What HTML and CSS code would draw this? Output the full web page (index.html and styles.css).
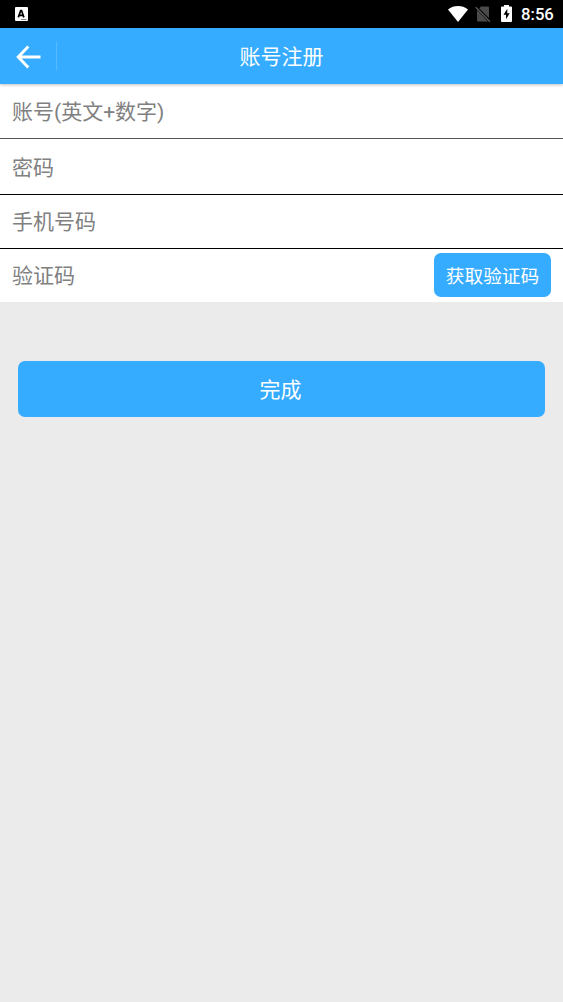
FILE: index.html
```html
<!DOCTYPE html>
<html lang="zh-CN">
<head>
<meta charset="utf-8">
<title>账号注册</title>
<link rel="stylesheet" href="styles.css">
</head>
<body>
<div class="status">
  <svg class="status-app" width="13" height="14" viewBox="0 0 13 14"><rect width="13" height="14" rx="1" fill="#fff"/><path d="M3.300 10.400 5.700 3.500h.8L8.900 10.400M4.200 8.300h4" fill="none" stroke="#000" stroke-width="1.700"/><path d="M6 12.500h5.500" stroke="#888" stroke-width="1"/></svg>
  <div class="status-right">
    <svg class="wifi" width="20" height="16" viewBox="0 0 20 16"><path d="M0 3.400C5.700-1.100 14.300-1.100 20 3.400L10 16Z" fill="#fff"/></svg>
    <svg class="sim" width="16" height="18" viewBox="0 0 16 18"><path d="M6 1.500H13a1 1 0 0 1 1 1V13.500L3.800 3.700ZM2 5 13 16.400H3a1 1 0 0 1-1-1Z" fill="#4a4a4a"/><path d="M1.400 1.400 16 16.200" stroke="#000" stroke-width="1.200"/><path d="M.7 2.200 15 16.800" stroke="#5a5a5a" stroke-width="1.400"/></svg>
    <svg class="battery" width="11" height="17" viewBox="0 0 11 17"><path d="M3 0h5v1.600h2a1 1 0 0 1 1 1V16a1 1 0 0 1-1 1H1a1 1 0 0 1-1-1V2.600a1 1 0 0 1 1-1h2Z" fill="#fff"/><path d="M6.300 3.800 2.500 9.800h2.500v4.500L8.700 8.200H6.300Z" fill="#000"/></svg>
    <span class="clock">8:56</span>
  </div>
</div>
<header class="bar">
  <div class="back"><svg width="26" height="24" viewBox="0 0 26 24"><path d="M12.300 1.500 2.200 12l10.100 10.500M2.500 12H24.500" fill="none" stroke="#fff" stroke-width="2.900"/></svg></div>
  <h1 class="title">账号注册</h1>
</header>
<main>
  <div class="form">
    <div class="field account">账号(英文+数字)</div>
    <div class="field password">密码</div>
    <div class="field phone">手机号码</div>
    <div class="field code"><span>验证码</span><button class="get-code">获取验证码</button></div>
  </div>
  <button class="submit">完成</button>
</main>
</body>
</html>
```
FILE: styles.css
```css
* { box-sizing: border-box; }
body {
  margin: 0;
  min-height: 1002px;
  background: #ebebeb;
  font-family: Roboto, "Noto Sans CJK SC", sans-serif;
  font-size: 21px;
}
button { border: 0; padding: 0; color: #fff; background: #35acff; font-family: inherit; }
svg { display: block; flex: none; }
.status {
  height: 28px;
  background: #000;
  display: flex;
  justify-content: space-between;
  align-items: center;
  padding: 0 10px 0 15px;
}
.status-right { display: flex; align-items: center; height: 28px; }
.wifi { margin-right: 7px; }
.sim { margin-right: 10px; }
.battery { margin-right: 9px; margin-bottom: 1px; }
.clock { color: #fff; font-size: 16.700px; font-weight: 500; line-height: 28px; width: 32px; padding-top: 1px; white-space: nowrap; }
.bar {
  height: 56px;
  background: #35acff;
  display: grid;
  grid-template-columns: 57px 1fr 57px;
  align-items: center;
  box-shadow: 0 1px 3px rgba(0, 0, 0, .25);
  position: relative;
}
.back { height: 28px; display: flex; align-items: center; padding: 1px 0 0 16px; border-right: 1px solid #55baff; }
.title { margin: 0; padding-top: 2px; color: #fff; font-size: 21px; font-weight: 400; line-height: 54px; text-align: center; }
.form { background: #fff; }
.field {
  display: flex;
  align-items: center;
  justify-content: space-between;
  padding: 0 12px 2px;
  color: #808080;
  border-bottom: 1px solid #000;
}
.account { height: 55px; border-color: #555; }
.password { height: 56px; }
.phone { height: 54px; padding-bottom: 4px; }
.code { height: 53px; border: 0; }
.code span { padding-bottom: 2px; }
.get-code { width: 117px; height: 44px; padding-bottom: 1px; border-radius: 7px; font-size: 18.700px; }
.submit { display: block; width: 527px; height: 56px; margin: 59px auto 0; padding: 0 2px 2px 0; border-radius: 7px; font-size: 21px; }
```
